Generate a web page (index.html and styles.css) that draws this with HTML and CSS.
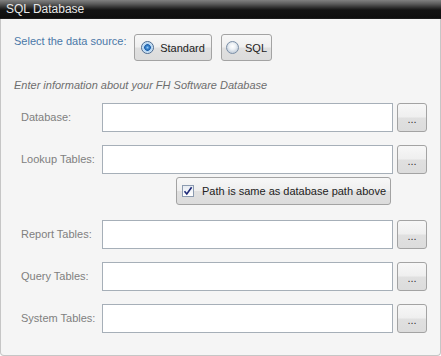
FILE: index.html
```html
<!DOCTYPE html>
<html>
<head>
<meta charset="utf-8">
<link rel="stylesheet" href="styles.css">
</head>
<body>
<div class="panel">
  <div class="titlebar">SQL Database</div>
  <div class="body">
    <div class="source-row">
      <span class="source-label">Select the data source:</span>
      <button class="btn radio-btn std"><span class="radio checked"></span><span>Standard</span></button>
      <button class="btn radio-btn sql"><span class="radio"></span><span>SQL</span></button>
    </div>
    <p class="intro">Enter information about your FH Software Database</p>
    <div class="fields">
      <div class="field"><label class="field-label">Database:</label><div class="input"></div><button class="btn browse">...</button></div>
      <div class="field"><label class="field-label">Lookup Tables:</label><div class="input"></div><button class="btn browse">...</button></div>
      <div class="check-row">
        <button class="btn check-btn">
          <span class="checkbox"><svg width="10" height="10" viewBox="0 0 10 10"><path d="M1.5 5.2 L3.8 8 L8.6 1.2" fill="none" stroke="#1f2a78" stroke-width="1.6"/></svg></span>
          <span>Path is same as database path above</span>
        </button>
      </div>
      <div class="field"><label class="field-label">Report Tables:</label><div class="input"></div><button class="btn browse">...</button></div>
      <div class="field"><label class="field-label">Query Tables:</label><div class="input"></div><button class="btn browse">...</button></div>
      <div class="field"><label class="field-label">System Tables:</label><div class="input"></div><button class="btn browse">...</button></div>
    </div>
  </div>
</div>
</body>
</html>
```
FILE: styles.css
```css
* { box-sizing: border-box; }
html, body { margin: 0; padding: 0; background: #ffffff; }
body {
  width: 441px;
  height: 356px;
  font-family: "Liberation Sans", Arial, sans-serif;
  font-size: 11px;
  line-height: 13px;
}
.panel {
  width: 441px;
  height: 356px;
  display: flex;
  flex-direction: column;
}
.titlebar {
  height: 19px;
  line-height: 19px;
  padding-left: 6px;
  color: #e8e8e8;
  font-size: 12px;
  background: linear-gradient(to bottom, #808080 0px, #5a5a5a 4px, #2a2a2a 8px, #141414 10px, #0f0f0f 18px, #2a2a2a 19px);
}
.body {
  flex: 1;
  background: #f5f5f5;
  border: 1px solid #c6c6c6;
  border-top: none;
  border-radius: 0 0 4px 4px;
  padding: 15px 13px 0 13px;
}
.source-row {
  display: flex;
  align-items: flex-start;
  gap: 9px;
}
.source-label {
  width: 111px;
  flex: none;
  white-space: nowrap;
  color: #4a78a8;
  padding-top: 1px;
}
.btn {
  font-family: inherit;
  font-size: 11px;
  color: #222;
  border: 1px solid #a3a3a3;
  border-radius: 3px;
  background: linear-gradient(to bottom, #f7f7f7 0%, #efefef 48%, #e0e0e0 52%, #dcdcdc 100%);
  padding: 0;
  margin: 0;
  display: flex;
  align-items: center;
}
.radio-btn {
  height: 27px;
  justify-content: center;
  gap: 6px;
}
.std { width: 78px; }
.sql { width: 51px; }
.radio {
  width: 13px;
  height: 13px;
  border-radius: 50%;
  border: 1px solid #7a8ea6;
  background: radial-gradient(circle at 50% 40%, #ffffff 0, #eef2f6 3px, #c9d3de 6px);
  flex: none;
}
.radio.checked {
  border-color: #4a6a90;
  background: radial-gradient(circle at 50% 50%, #8fc8f2 0, #3a84cf 1.6px, #1f5ea6 3px, #a9cff0 3.6px, #d7e8f7 5.5px);
}
.intro {
  margin: 18px 0 0 0;
  color: #6e6e6e;
  font-style: italic;
  white-space: nowrap;
}
.fields {
  margin-top: 11px;
  padding-left: 7px;
  display: flex;
  flex-direction: column;
}
.field {
  display: flex;
  align-items: center;
  height: 29px;
}
.field + .field { margin-top: 13px; }
.field-label {
  width: 81px;
  flex: none;
  color: #808080;
  white-space: nowrap;
}
.input {
  width: 291px;
  height: 29px;
  background: #ffffff;
  border: 1px solid #a6afb8;
}
.browse {
  width: 30px;
  height: 29px;
  margin-left: 4px;
  justify-content: center;
  color: #333;
  padding-top: 2px;
}
.check-row {
  width: 372px;
  display: flex;
  justify-content: flex-end;
  padding-right: 2px;
  margin: 3px 0 15px 0;
}
.check-btn {
  width: 215px;
  height: 28px;
  padding-left: 5px;
  gap: 8px;
}
.checkbox {
  width: 12px;
  height: 12px;
  border: 1px solid #8c9bb0;
  background: linear-gradient(to bottom, #e6ebf2, #ffffff);
  display: flex;
  align-items: center;
  justify-content: center;
  flex: none;
}
.checkbox svg { display: block; }
```
